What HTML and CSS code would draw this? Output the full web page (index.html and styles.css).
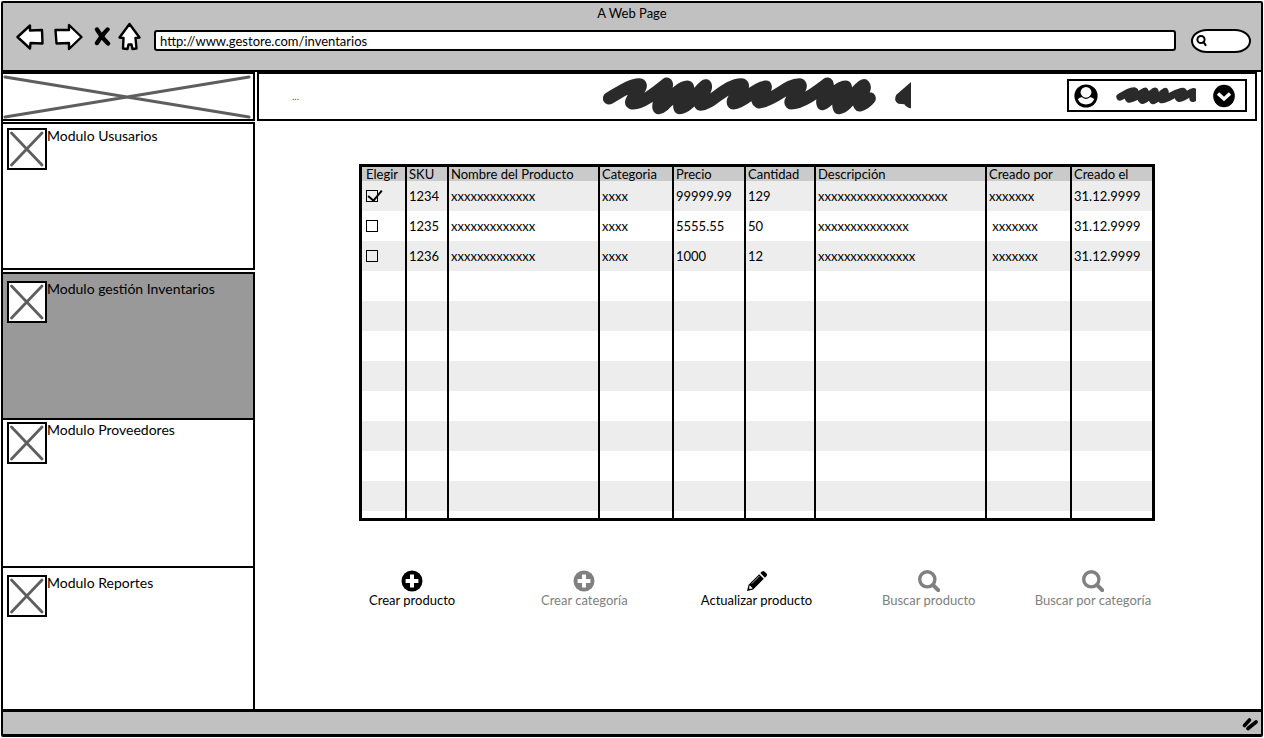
FILE: index.html
```html
<!DOCTYPE html>
<html lang="es">
<head>
<meta charset="utf-8">
<title>A Web Page</title>
<link rel="stylesheet" href="styles.css">
</head>
<body>
<svg class="defs" aria-hidden="true">
  <symbol id="cross" viewBox="0 0 36 38">
    <path d="M2.5 3 L33 35 M33 3 L2.5 35" fill="none" stroke="#5e5e5e" stroke-width="2.8" stroke-linecap="round"/>
  </symbol>
  <symbol id="plus" viewBox="0 0 22 22">
    <circle cx="11" cy="11" r="10.5" fill="currentColor"/>
    <path d="M11 4.6v12.8M4.6 11h12.8" stroke="#fff" stroke-width="4"/>
  </symbol>
  <symbol id="lens" viewBox="0 0 22 22">
    <circle cx="9.3" cy="9.3" r="7.6" fill="none" stroke="currentColor" stroke-width="3.4"/>
    <path d="M15 15l5.2 5.2" stroke="currentColor" stroke-width="4" stroke-linecap="round"/>
  </symbol>
</svg>
<div class="window">
  <header class="chrome">
    <div class="title">A Web Page</div>
    <div class="toolbar">
      <button class="tool" type="button" aria-label="Atrás">
        <svg width="28" height="28" viewBox="0 0 28 28"><path d="M1.5 14 L14 2.5 L14 7.5 L26 7 L26.5 20.5 L14.5 20 L14 25.5 Z" class="outline"/></svg>
      </button>
      <button class="tool tool-forward" type="button" aria-label="Adelante">
        <svg width="29" height="28" viewBox="0 0 29 28"><path d="M27.5 14 L15 2 L15 7 L1.5 7 L2.5 20.5 L15 20 L15 26 Z" class="outline"/></svg>
      </button>
      <button class="tool tool-stop" type="button" aria-label="Detener">
        <svg width="17" height="22" viewBox="0 0 17 22"><path d="M3 3.5 Q7 11 14 17.5 M13.5 3.5 Q7.5 9 3 17" fill="none" stroke="#000" stroke-width="4.4" stroke-linecap="round"/><path d="M4 3 L8.5 8 L13 3 L11 10 L7 14Z"/></svg>
      </button>
      <button class="tool tool-home" type="button" aria-label="Inicio">
        <svg width="23" height="29" viewBox="0 0 23 29"><path d="M11.5 2 L21.5 15.5 L17.5 16 L18.5 26.5 L14.5 27 L13.5 22.5 L10.5 22.5 L9.5 27 L5 26.5 L5.5 16 L1.5 15.5 Z" class="outline"/></svg>
      </button>
      <input class="address" type="text" aria-label="Dirección" value="http://www.gestore.com/inventarios">
      <label class="search">
        <svg width="12" height="14" viewBox="0 0 12 14"><circle cx="5" cy="5.5" r="3.6" fill="none" stroke="#000" stroke-width="2"/><path d="M7.5 8 L9.5 11" stroke="#000" stroke-width="2.2" stroke-linecap="round"/></svg>
        <input type="search" aria-label="Buscar">
      </label>
    </div>
  </header>

  <div class="page">
    <aside class="sidebar">
      <div class="logo">
        <svg viewBox="0 0 252 44" preserveAspectRatio="none"><path d="M2 3 L248 42 M248 3 L2 42" fill="none" stroke="#5e5e5e" stroke-width="3" stroke-linecap="round"/></svg>
      </div>
      <nav class="modules">
        <a class="module" href="#usuarios"><svg class="thumb"><use href="#cross"/></svg><span>Modulo Ususarios</span></a>
        <a class="module padded current" href="#inventarios"><svg class="thumb"><use href="#cross"/></svg><span>Modulo gestión Inventarios</span></a>
        <a class="module flush" href="#proveedores"><svg class="thumb"><use href="#cross"/></svg><span>Modulo Proveedores</span></a>
        <a class="module padded" href="#reportes"><svg class="thumb"><use href="#cross"/></svg><span>Modulo Reportes</span></a>
      </nav>
    </aside>

    <main class="content">
      <div class="topbar">
        <span class="dots">...</span>
        <svg class="headline" width="308" height="38" viewBox="42 233 924 114">
          <g fill="none" stroke="#2a2a2a" stroke-width="37" stroke-linecap="round" stroke-linejoin="round">
            <path d="M60 297 C95 277 125 255 150 255 C172 257 116 304 129 312 C155 316 200 280 233 253 C240 262 202 306 209 326 C230 324 262 264 296 262 C306 276 264 306 272 326 C300 326 330 270 350 258 C356 274 322 298 334 316 C370 314 410 255 458 255 C476 264 422 298 433 312 C465 310 495 266 530 262 C534 276 492 298 510 309 C560 302 595 254 632 255 C648 264 596 302 606 312 C640 312 685 276 715 253 C722 268 694 298 701 314 C720 310 742 262 770 262 C776 276 740 308 750 326 C776 324 800 268 825 258 C836 270 800 300 812 318 Q830 312 842 297"/>
            <path d="M240 300 L345 290 M725 295 L820 290"/>
          </g>
          <path d="M966 248 L922 286 Q912 303 928 313 L946 315 Q954 326 966 327 Z" fill="#2a2a2a"/>
        </svg>
        <button class="account" type="button" aria-label="Cuenta">
          <svg width="24" height="24" viewBox="0 0 24 24"><circle cx="12" cy="12" r="11.6"/><circle cx="12" cy="8.3" r="5.4" fill="#fff"/><path d="M3.8 15.2 Q6 12.8 8 13.2 Q12 16.6 16 13.2 Q18 12.8 20.2 15.2 Q17.6 20.4 12 20.4 Q6.4 20.4 3.8 15.2Z" fill="#fff"/></svg>
          <svg width="80" height="20" viewBox="231 260 240 60"><path d="M243 293 C258 286 270 275 286 275 C296 278 262 292 270 299 C284 300 302 284 318 276 C322 284 298 294 310 303 C326 300 336 280 348 276 C350 288 332 296 342 304 C358 300 366 282 378 277 C382 288 358 294 368 301 C388 300 412 276 432 276 C440 282 412 290 420 297 C440 294 452 278 463 277 L462 297 L480 290" fill="none" stroke="#2a2a2a" stroke-width="22" stroke-linecap="round" stroke-linejoin="round"/></svg>
          <svg width="22" height="24" viewBox="0 0 22 24"><ellipse cx="11" cy="12" rx="10.8" ry="11.3"/><path d="M5 9.5 L11 15 L17 9.5" fill="none" stroke="#fff" stroke-width="3.4"/></svg>
        </button>
      </div>

      <div class="inventory">
        <table class="products">
          <colgroup>
            <col class="c-pick"><col class="c-sku"><col class="c-name"><col class="c-cat"><col class="c-price"><col class="c-qty"><col><col class="c-by"><col class="c-on">
          </colgroup>
          <thead>
            <tr><th>Elegir</th><th>SKU</th><th>Nombre del Producto</th><th>Categoria</th><th>Precio</th><th>Cantidad</th><th>Descripción</th><th>Creado por</th><th>Creado el</th></tr>
          </thead>
          <tbody>
            <tr><td><input type="checkbox" aria-label="Elegir 1234" checked></td><td>1234</td><td>xxxxxxxxxxxxx</td><td>xxxx</td><td>99999.99</td><td>129</td><td>xxxxxxxxxxxxxxxxxxxx</td><td>xxxxxxx</td><td>31.12.9999</td></tr>
            <tr><td><input type="checkbox" aria-label="Elegir 1235"></td><td>1235</td><td>xxxxxxxxxxxxx</td><td>xxxx</td><td>5555.55</td><td>50</td><td>xxxxxxxxxxxxxx</td><td>&nbsp;xxxxxxx</td><td>31.12.9999</td></tr>
            <tr><td><input type="checkbox" aria-label="Elegir 1236"></td><td>1236</td><td>xxxxxxxxxxxxx</td><td>xxxx</td><td>1000</td><td>12</td><td>xxxxxxxxxxxxxxx</td><td>&nbsp;xxxxxxx</td><td>31.12.9999</td></tr>
            <tr><td></td><td></td><td></td><td></td><td></td><td></td><td></td><td></td><td></td></tr>
            <tr><td></td><td></td><td></td><td></td><td></td><td></td><td></td><td></td><td></td></tr>
            <tr><td></td><td></td><td></td><td></td><td></td><td></td><td></td><td></td><td></td></tr>
            <tr><td></td><td></td><td></td><td></td><td></td><td></td><td></td><td></td><td></td></tr>
            <tr><td></td><td></td><td></td><td></td><td></td><td></td><td></td><td></td><td></td></tr>
            <tr><td></td><td></td><td></td><td></td><td></td><td></td><td></td><td></td><td></td></tr>
            <tr><td></td><td></td><td></td><td></td><td></td><td></td><td></td><td></td><td></td></tr>
            <tr><td></td><td></td><td></td><td></td><td></td><td></td><td></td><td></td><td></td></tr>
            <tr class="rest"><td></td><td></td><td></td><td></td><td></td><td></td><td></td><td></td><td></td></tr>
          </tbody>
        </table>
      </div>

      <div class="actions">
        <button class="action" type="button"><svg><use href="#plus"/></svg>Crear producto</button>
        <button class="action" type="button" disabled><svg><use href="#plus"/></svg>Crear categoría</button>
        <button class="action" type="button"><svg viewBox="0 0 22 22"><path d="M1 21 L2.6 14.8 L13.2 4.2 L17.8 8.8 L7.2 19.4 Z M14.3 3.1 L16 1.4 Q17.2 .4 18.4 1.4 L20.6 3.6 Q21.6 4.8 20.6 6 L18.9 7.7 Z" fill="currentColor"/><path d="M3.8 15.8 L6.2 18.2 L3.6 18.6 Z M5.8 13.6 L13.4 6" fill="#fff" stroke="#fff" stroke-width=".7"/></svg>Actualizar producto</button>
        <button class="action" type="button" disabled><svg><use href="#lens"/></svg>Buscar producto</button>
        <button class="action" type="button" disabled><svg><use href="#lens"/></svg>Buscar por categoría</button>
      </div>
    </main>
  </div>

  <footer class="statusbar">
    <svg width="18" height="16" viewBox="0 0 18 16"><path d="M3.5 10.5 L8.5 5 M7 13.5 L15 7" fill="none" stroke="#000" stroke-width="3.6" stroke-linecap="round"/></svg>
  </footer>
</div>
</body>
</html>
```
FILE: styles.css
```css
* {
  box-sizing: border-box;
}

body {
  margin: 0;
  background: #fff;
  color: #000;
  font-family: Lato, "Open Sans", sans-serif;
  font-size: 14px;
  line-height: 16px;
}

button,
input {
  font: inherit;
  color: inherit;
}

button {
  padding: 0;
  border: 0;
  background: none;
}

svg {
  display: block;
  flex: none;
}

.defs {
  position: absolute;
  width: 0;
  height: 0;
}

.window {
  display: flex;
  flex-direction: column;
  min-height: calc(100vh - 2px);
  margin: 1px;
  border: 2px solid #000;
  border-bottom-width: 3px;
  border-radius: 2px;
}

/* Browser frame */

.chrome {
  border-bottom: 2px solid #000;
  background: #c1c1c1;
}

.title {
  padding-top: 2px;
  text-align: center;
  font-size: 13px;
}

.toolbar {
  display: flex;
  align-items: center;
  height: 49px;
  padding: 0 10px 18px 13px;
}

.tool-forward {
  margin-left: 10px;
}

.tool-stop {
  margin-left: 11px;
}

.tool-home {
  margin: 0 13px 0 7px;
}

.outline {
  fill: #fff;
  stroke: #000;
  stroke-width: 2.4;
  stroke-linejoin: round;
}

.address {
  flex: 1;
  min-width: 0;
  height: 21px;
  margin-top: 8px;
  padding: 0 4px;
  border: 2px solid #000;
  border-radius: 3px;
  background: #fff;
  font-size: 13px;
}

.search {
  display: flex;
  align-items: center;
  width: 60px;
  height: 24px;
  margin: 8px 0 0 15px;
  padding: 0 3px;
  border: 2px solid #000;
  border-radius: 16px / 12px;
  background: #fff;
}

.search input {
  width: 100%;
  min-width: 0;
  padding: 0;
  border: 0;
  outline: 0;
  background: none;
}

/* Page body */

.page {
  flex: 1;
  display: grid;
  grid-template-columns: 252px 1fr;
  column-gap: 2px;
}

.sidebar {
  display: flex;
  flex-direction: column;
  gap: 1px;
}

.logo {
  height: 49px;
  border: solid #000;
  border-width: 2px 2px 2px 0;
}

.logo svg {
  width: 100%;
  height: 100%;
}

.modules {
  flex: 1;
  display: grid;
  grid-template-rows: 149fr 150fr 149fr 141fr;
}

.module {
  display: flex;
  align-items: flex-start;
  padding: 4px 4px 0;
  border: solid #000;
  border-width: 0 2px 2px 0;
  color: #000;
  text-decoration: none;
}

.module:first-child {
  border-top-width: 2px;
}

.module:last-child {
  border-bottom-width: 0;
}

.module.padded {
  padding-top: 7px;
}

.module.flush {
  padding-top: 2px;
}

.module.current {
  margin-top: 2px;
  border-top-width: 2px;
  background: #999;
}

.thumb {
  width: 40px;
  height: 42px;
  border: 2px solid #000;
  background: #fff;
}

.topbar {
  display: grid;
  grid-template-columns: 344px 1fr auto;
  align-items: center;
  height: 49px;
  margin-right: 4px;
  padding: 0 8px 2px 0;
  border: 2px solid #000;
}

.dots {
  padding-left: 33px;
  color: #555;
  font-size: 10px;
}

.account {
  display: flex;
  align-items: center;
  justify-content: space-between;
  width: 180px;
  height: 33px;
  padding: 0 10px 0 5px;
  border: 2px solid #000;
}

.inventory {
  padding: 43px 106px 0 102px;
}

.products {
  width: 100%;
  border: 3px solid #000;
  border-spacing: 0;
  table-layout: fixed;
}

.c-pick { width: 43px; }
.c-sku { width: 42px; }
.c-name { width: 151px; }
.c-cat { width: 74px; }
.c-price { width: 72px; }
.c-qty { width: 70px; }
.c-by { width: 85px; }
.c-on { width: 82px; }

.products th,
.products td {
  padding: 0 0 0 2px;
  border-left: 2px solid #000;
  text-align: left;
  white-space: nowrap;
}

.products th:first-child,
.products td:first-child {
  padding-left: 4px;
  border-left: 0;
}

.products th {
  height: 14px;
  background: #cacaca;
  font-size: 13px;
  font-weight: 400;
  line-height: 14px;
}

.products td {
  height: 30px;
  font-size: 13px;
}

.products tr:nth-child(odd) td {
  background: #ededed;
}

.products .rest td {
  height: 7px;
}

.products input {
  appearance: none;
  display: block;
  width: 12px;
  height: 12px;
  margin: 0;
  border: 1px solid #000;
}

.products input:checked::after {
  content: "";
  display: block;
  width: 6px;
  height: 12px;
  margin: -4px 0 0 4px;
  border: solid #000;
  border-width: 0 2px 2px 0;
  transform: rotate(40deg);
}

.actions {
  display: grid;
  grid-template-columns: 172fr 172fr 172fr 172fr 156fr;
  justify-items: center;
  margin: 49px 90px 0 69px;
}

.action {
  display: flex;
  flex-direction: column;
  align-items: center;
  font-size: 13px;
}

.action svg {
  width: 22px;
  height: 22px;
}

.action:disabled {
  color: #808080;
}

/* Status bar */

.statusbar {
  display: flex;
  align-items: center;
  justify-content: flex-end;
  height: 25px;
  padding-right: 2px;
  border-top: 3px solid #000;
  background: #c1c1c1;
}
```
